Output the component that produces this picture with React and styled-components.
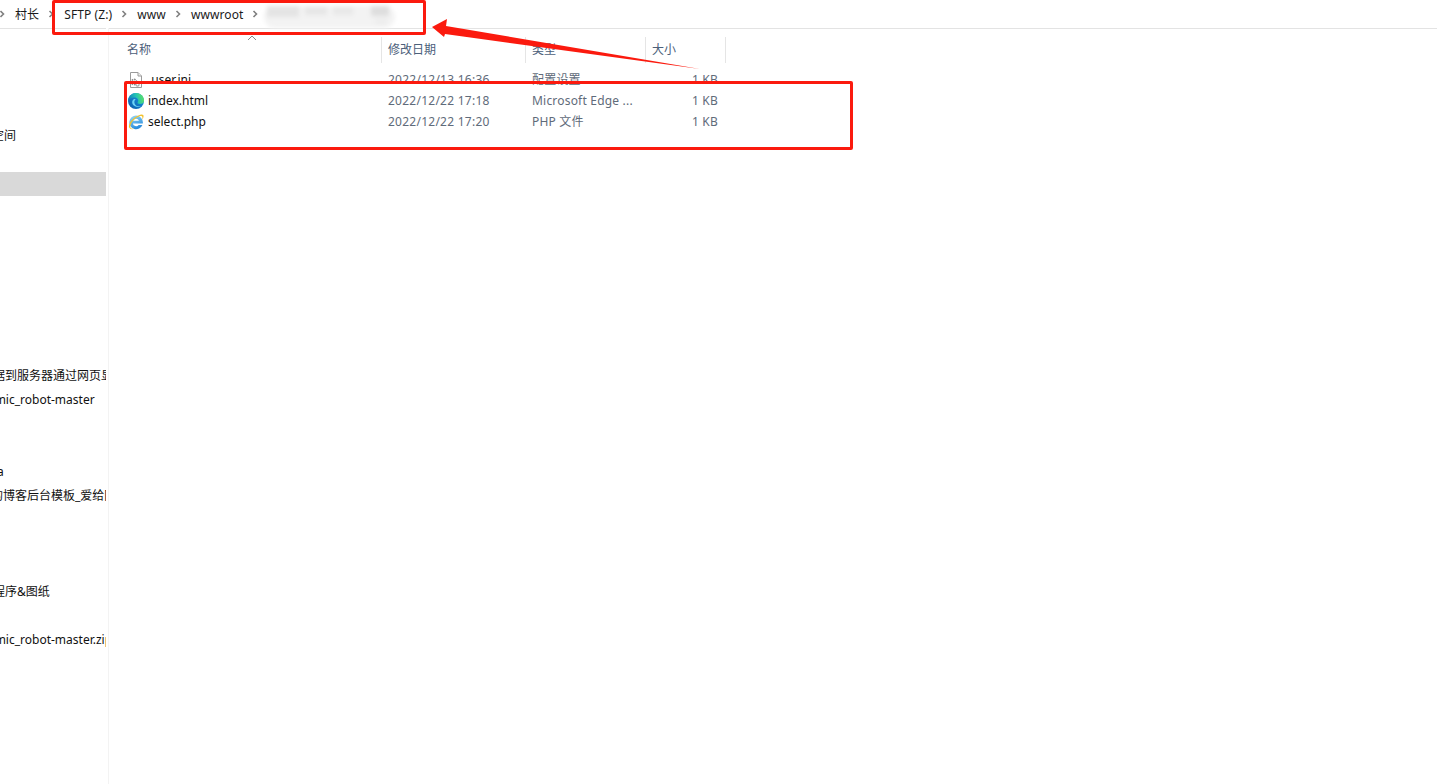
import React from "react";
import styled, { createGlobalStyle } from "styled-components";

const GlobalStyle = createGlobalStyle`
  html, body {
    margin: 0;
    padding: 0;
    height: 100%;
    background: #fff;
    overflow: hidden;
  }
`;

const FONT = `"Noto Sans", "Noto Sans CJK SC", sans-serif`;

const sidebarRows = [
  ...Array(4).fill({}),
  { text: "空间", shift: -8 },
  {},
  { selected: true },
  ...Array(7).fill({}),
  { text: "据到服务器通过网页显", shift: -7 },
  { text: "dynamic_robot-master", shift: -33 },
  {},
  {},
  { text: "a", shift: -3 },
  { text: "的博客后台模板_爱给网", shift: -9 },
  {},
  {},
  {},
  { text: "程序&图纸", shift: -7 },
  {},
  { text: "dynamic_robot-master.zip", shift: -33 },
];

const crumbs = ["", "村长", "SFTP (Z:)", "www", "wwwroot"];

const columns = [
  { label: "名称", width: 262 },
  { label: "修改日期", width: 144 },
  { label: "类型", width: 120 },
  { label: "大小", width: 80 },
];

const files = [
  { name: ".user.ini", date: "2022/12/13 16:36", type: "配置设置", size: "1 KB", icon: <IniIcon /> },
  { name: "index.html", date: "2022/12/22 17:18", type: "Microsoft Edge ...", size: "1 KB", icon: <EdgeIcon /> },
  { name: "select.php", date: "2022/12/22 17:20", type: "PHP 文件", size: "1 KB", icon: <IeIcon /> },
];

function Chevron() {
  return (
    <svg width="6" height="8" viewBox="0 0 6 8">
      <path d="M1.5 1 L4.5 4 L1.5 7" fill="none" stroke="#808080" strokeWidth="1.6" />
    </svg>
  );
}

function IniIcon() {
  return (
    <svg width="16" height="16" viewBox="0 0 16 16">
      <path d="M2.5 .5 H10 L13.5 4 V15.5 H2.5 Z" fill="#fff" stroke="#9a9a9a" />
      <path d="M10 .5 V4 H13.5" fill="#eee" stroke="#9a9a9a" />
      <circle cx="6" cy="10" r="2.6" fill="none" stroke="#8a8a8a" strokeWidth="1.6" strokeDasharray="1.6 .8" />
      <circle cx="9.5" cy="12.5" r="1.6" fill="none" stroke="#a5a5a5" strokeWidth="1.2" />
    </svg>
  );
}

function EdgeIcon() {
  return (
    <svg width="16" height="16" viewBox="0 0 16 16">
      <defs>
        <linearGradient id="edgeBase" x1="0" y1="1" x2="1" y2="0">
          <stop offset="0" stopColor="#0b5aa8" />
          <stop offset="1" stopColor="#1c9be6" />
        </linearGradient>
        <linearGradient id="edgeTop" x1="0" y1="0.6" x2="1" y2="0.4">
          <stop offset="0" stopColor="#0d78bd" />
          <stop offset="0.55" stopColor="#22c4b4" />
          <stop offset="1" stopColor="#62e35e" />
        </linearGradient>
      </defs>
      <circle cx="8" cy="8" r="8" fill="url(#edgeBase)" />
      <path d="M0 8 C0.4 3 4 0 8 0 C13 0 16 3.8 16 7.6 C16 10.2 14 11 12 11 C10 11 9 10.2 9.8 9 C11 7.2 9.6 4.6 6.6 4.6 C3.6 4.6 1 6 0 8 Z" fill="url(#edgeTop)" />
      <path d="M5.8 6.2 C3.8 7.4 3.6 10.6 5.8 12.6 C7.6 14.2 10.8 14.6 13.2 13 C10.4 14 7.4 12.8 6.6 10.4 C6.2 9 6.2 7.4 7.6 6.2 C7 5.9 6.4 5.9 5.8 6.2 Z" fill="#6ed4f5" />
    </svg>
  );
}

function IeIcon() {
  return (
    <svg width="16" height="16" viewBox="0 0 16 16">
      <defs>
        <linearGradient id="ieBody" x1="0" y1="0" x2="0.4" y2="1">
          <stop offset="0" stopColor="#9bdcf8" />
          <stop offset="1" stopColor="#2a8cdc" />
        </linearGradient>
      </defs>
      <path d="M8 1.6 A6.8 6.8 0 1 0 14.4 11 H10.6 A3.2 3.2 0 0 1 4.9 9.4 H14.8 A6.8 6.8 0 0 0 8 1.6 Z M5 6.8 A3.2 3.2 0 0 1 11 6.8 Z" fill="url(#ieBody)" fillRule="evenodd" />
      <path d="M1.2 13.5 C0 11 2.8 6.6 6.4 3.8 C10 1 14 -0.4 15.2 1 C16 2 15.4 4 14.2 5.8 C14.6 3.8 14.6 2.4 13.6 2 C11.4 1.4 7 4 4.4 7.6 C2.4 10.4 1.4 13.6 3.4 14.6 C4.4 15 5.4 14.8 6.6 14.2 C4.4 15.8 2.2 15.4 1.2 13.5 Z" fill="#f2c230" />
    </svg>
  );
}

function PointerArrow() {
  return (
    <svg width="1437" height="784" viewBox="0 0 1437 784">
      <polygon points="432,27 447,19 446,26 700,69 445,34 444,37" fill="#fb1a0e" />
    </svg>
  );
}

function BlurredName() {
  return (
    <svg width="150" height="40" viewBox="0 0 150 40">
      <defs>
        <filter id="soft" x="-20%" y="-50%" width="140%" height="200%">
          <feGaussianBlur stdDeviation="2.2" />
        </filter>
      </defs>
      <g filter="url(#soft)">
        <rect x="7" y="6" width="131" height="22" rx="11" fill="#f3f3f3" />
        <rect x="10" y="6" width="32" height="11" fill="#e4e4e4" />
        <rect x="48" y="7" width="22" height="8" fill="#e6e6e6" />
        <rect x="76" y="7" width="20" height="8" fill="#e8e8e8" />
        <rect x="114" y="6" width="18" height="10" fill="#dedede" />
        <rect x="118" y="17" width="12" height="8" fill="#eeeeee" />
      </g>
    </svg>
  );
}

export default function App() {
  return (
    <Page>
      <GlobalStyle />
      <AddressBar>
        {crumbs.map((label, i) => (
          <Crumb key={i}>
            {label && <CrumbLabel>{label}</CrumbLabel>}
            <Chevron />
          </Crumb>
        ))}
      </AddressBar>
      <Body>
        <Sidebar>
          {sidebarRows.map((row, i) => (
            <SideRow key={i} $selected={row.selected}>
              {row.text && <SideText $shift={row.shift}>{row.text}</SideText>}
            </SideRow>
          ))}
        </Sidebar>
        <Content>
          <HeaderRow>
            {columns.map((col) => (
              <HeaderCell key={col.label} $width={col.width}>
                {col.label}
              </HeaderCell>
            ))}
          </HeaderRow>
          <FileList>
            {files.map((file) => (
              <FileRow key={file.name}>
                <NameCell>
                  <IconSlot>{file.icon}</IconSlot>
                  <FileName>{file.name}</FileName>
                </NameCell>
                <DateCell>{file.date}</DateCell>
                <TypeCell>{file.type}</TypeCell>
                <SizeCell>{file.size}</SizeCell>
              </FileRow>
            ))}
          </FileList>
        </Content>
      </Body>

      <SortCaret>
        <svg width="10" height="6" viewBox="0 0 10 6">
          <path d="M1 5 L5 1 L9 5" fill="none" stroke="#8a8a8a" />
        </svg>
      </SortCaret>
      <BlurPatch>
        <BlurredName />
      </BlurPatch>
      <PathMark />
      <FilesMark />
      <ArrowLayer>
        <PointerArrow />
      </ArrowLayer>
    </Page>
  );
}

const Page = styled.div`
  position: relative;
  width: 1437px;
  height: 784px;
  overflow: hidden;
  background: #fff;
  font-family: ${FONT};
  font-size: 12px;
`;

const AddressBar = styled.div`
  display: flex;
  align-items: center;
  height: 28px;
  margin-left: -1px;
  border-bottom: 1px solid #e3e3e3;
  color: #1a1a1a;
`;

const Crumb = styled.div`
  display: flex;
  align-items: center;
  gap: 9px;
  margin-right: 10px;
`;

const CrumbLabel = styled.span`
  white-space: nowrap;
  font-size: 12px;
  letter-spacing: 0.1px;
`;

const Body = styled.div`
  display: flex;
  height: 755px;
`;

const Sidebar = styled.nav`
  flex: 0 0 106px;
  margin: -1px 2px 0 0;
  box-shadow: 2px 0 0 #fff, 3px 0 0 #f3f3f3;
  overflow: hidden;
`;

const SideRow = styled.div`
  height: 24px;
  line-height: 24px;
  white-space: nowrap;
  overflow: hidden;
  color: #111;
  background: ${(p) => (p.$selected ? "#d9d9d9" : "transparent")};
`;

const SideText = styled.span`
  display: inline-block;
  margin-left: ${(p) => p.$shift}px;
`;

const Content = styled.main`
  flex: 1;
  padding: 8px 0 0 12px;
`;

const HeaderRow = styled.div`
  display: flex;
  height: 26px;
`;

const HeaderCell = styled.div`
  flex: 0 0 ${(p) => p.$width}px;
  box-sizing: border-box;
  padding-left: 6px;
  line-height: 26px;
  color: #4c607a;
  border-right: 1px solid #e5e5e5;

  &:first-child {
    padding-left: 7px;
  }
`;

const FileList = styled.div`
  margin-top: 6px;
`;

const FileRow = styled.div`
  display: flex;
  align-items: center;
  height: 21px;
  line-height: 16px;
  color: #5f6b7a;
`;

const NameCell = styled.div`
  display: flex;
  align-items: center;
  flex: 0 0 268px;
  padding-left: 8px;
  box-sizing: border-box;
  gap: 4px;
`;

const IconSlot = styled.span`
  display: flex;
  width: 16px;
  height: 16px;
`;

const FileName = styled.span`
  color: #111;
`;

const DateCell = styled.div`
  flex: 0 0 144px;
  letter-spacing: 0.25px;
`;

const TypeCell = styled.div`
  flex: 0 0 110px;
  white-space: nowrap;
  letter-spacing: 0.2px;
`;

const SizeCell = styled.div`
  flex: 0 0 76px;
  text-align: right;
  letter-spacing: 0.2px;
`;

const SortCaret = styled.div`
  position: absolute;
  left: 247px;
  top: 35px;
  display: flex;
`;

const BlurPatch = styled.div`
  position: absolute;
  left: 257px;
  top: 0;
  display: flex;
`;

const PathMark = styled.div`
  position: absolute;
  left: 52px;
  top: 0;
  width: 374px;
  height: 35px;
  box-sizing: border-box;
  border: 3px solid #fb1a0e;
  border-radius: 2px;
`;

const FilesMark = styled.div`
  position: absolute;
  left: 124px;
  top: 81px;
  width: 729px;
  height: 69px;
  box-sizing: border-box;
  border: 3px solid #fb1a0e;
  border-radius: 2px;
`;

const ArrowLayer = styled.div`
  position: absolute;
  inset: 0;
  pointer-events: none;
`;
